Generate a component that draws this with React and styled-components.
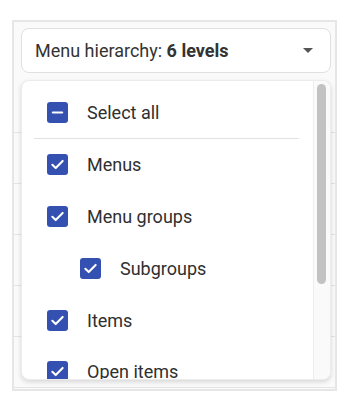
import React from 'react'
import styled, { createGlobalStyle } from 'styled-components'

const GlobalStyle = createGlobalStyle`
  body {
    margin: 0;
    background: #fff;
    font-family: Roboto, "Noto Sans", sans-serif;
    color: #333;
  }
`

const Frame = styled.div`
  position: relative;
  box-sizing: border-box;
  width: 325px;
  height: 371px;
  margin: 20px 0 0 12px;
  border: 2px solid #e6e6e6;
  background: #fafafa;
  overflow: hidden;
`

const SelectButton = styled.button`
  box-sizing: border-box;
  display: flex;
  align-items: center;
  justify-content: space-between;
  width: 310px;
  height: 45px;
  margin: 6px 0 0 7px;
  padding: 0 17px 0 13px;
  border: 1px solid #e0e0e0;
  border-radius: 8px;
  background: #fff;
  font: inherit;
  font-size: 18px;
  color: #333;
`

const Strong = styled.b`
  font-weight: 700;
`

const Caret = styled.span`
  width: 0;
  height: 0;
  border-left: 5px solid transparent;
  border-right: 5px solid transparent;
  border-top: 5px solid #555;
`

const Table = styled.div`
  margin-top: 9px;
`

const TableRow = styled.div`
  height: 50px;
  border-bottom: 1px solid #e4e4e4;
`

const Panel = styled.div`
  position: absolute;
  top: 58px;
  left: 7px;
  box-sizing: border-box;
  display: flex;
  width: 310px;
  height: 300px;
  border: 1px solid #ececec;
  border-radius: 8px;
  background: #fff;
  box-shadow: 0 2px 5px rgba(0, 0, 0, 0.14);
  overflow: hidden;
`

const List = styled.div`
  flex: 1;
  padding-top: 5px;
`

const Row = styled.label`
  display: flex;
  align-items: center;
  height: ${p => (p.$first ? 52 : 51.75)}px;
  padding-left: ${p => (p.$indent ? 58 : 25)}px;
  font-size: 18px;
  color: #2f2f2f;
`

const Box = styled.span`
  display: flex;
  align-items: center;
  justify-content: center;
  width: 21px;
  height: 21px;
  margin-right: 19px;
  border-radius: 3px;
  background: #3451b2;
`

const Divider = styled.div`
  height: 1px;
  margin: 0 14px 0 12px;
  background: #e2e2e2;
`

const Track = styled.div`
  width: 16px;
  border-left: 1px solid #ececec;
  background: #fafafa;
  padding-top: 3px;
`

const Thumb = styled.div`
  width: 9px;
  height: 200px;
  margin-left: 3px;
  border-radius: 5px;
  background: #c2c2c2;
`

const Check = () => (
  <svg width="15" height="15" viewBox="0 0 16 16">
    <path d="M2.5 8.3l3.6 3.5L13.5 4.2" fill="none" stroke="#fff" strokeWidth="2.2" strokeLinecap="round" strokeLinejoin="round" />
  </svg>
)

const Dash = () => (
  <svg width="13" height="13" viewBox="0 0 14 14">
    <path d="M2 7h10" stroke="#fff" strokeWidth="2.4" strokeLinecap="round" />
  </svg>
)

const levels = [
  { label: 'Menus' },
  { label: 'Menu groups' },
  { label: 'Subgroups', indent: true },
  { label: 'Items' },
  { label: 'Open items' }
]

const App = () => {
  return (
    <>
      <GlobalStyle />
      <Frame>
        <SelectButton>
          <span>
            Menu hierarchy: <Strong>6 levels</Strong>
          </span>
          <Caret />
        </SelectButton>
        <Table>
          {[0, 1, 2, 3, 4, 5, 6].map(i => (
            <TableRow key={i} />
          ))}
        </Table>
        <Panel>
          <List>
            <Row $first>
              <Box>
                <Dash />
              </Box>
              Select all
            </Row>
            <Divider />
            {levels.map(level => (
              <Row key={level.label} $indent={level.indent}>
                <Box>
                  <Check />
                </Box>
                {level.label}
              </Row>
            ))}
          </List>
          <Track>
            <Thumb />
          </Track>
        </Panel>
      </Frame>
    </>
  )
}

export default App
